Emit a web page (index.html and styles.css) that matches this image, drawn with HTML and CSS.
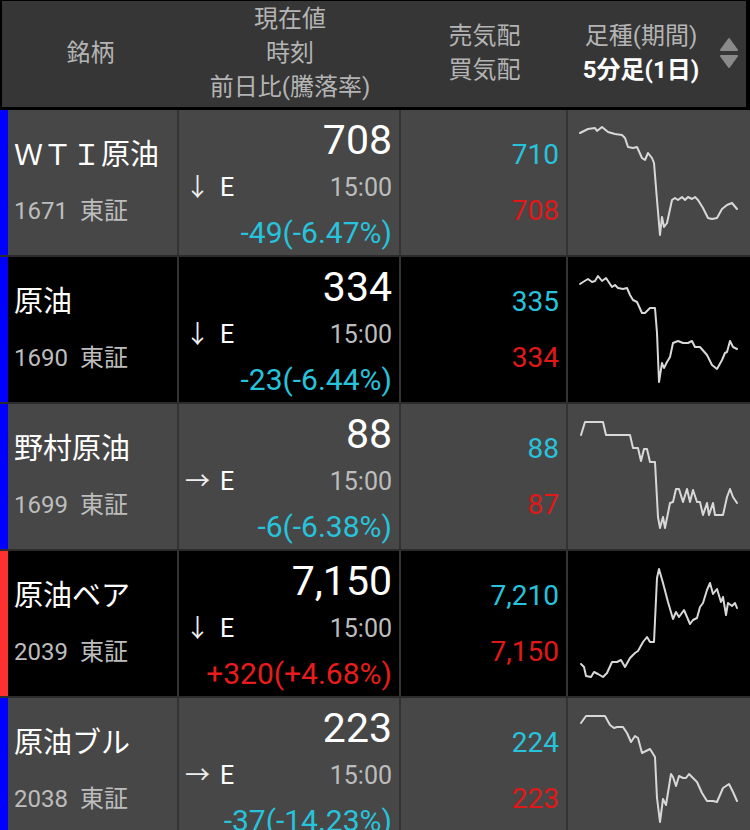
FILE: index.html
```html
<!DOCTYPE html>
<html lang="ja">
<head>
    <meta charset="UTF-8">
    <meta name="viewport" content="width=device-width, initial-scale=1.0">
    <title>銘柄一覧 - 原油</title>
    <link rel="stylesheet" href="styles.css">
</head>
<body>
    <!-- Column header -->
    <div class="head">
        <div class="hcol">銘柄</div>
        <div class="hcol">
            <div>現在値</div>
            <div>時刻</div>
            <div>前日比(騰落率)</div>
        </div>
        <div class="hcol">
            <div>売気配</div>
            <div>買気配</div>
        </div>
        <div class="hcol hchart">
            <div class="hchart-text">
                <div>足種(期間)</div>
                <div class="period">5分足(1日)</div>
            </div>
            <svg class="sort" width="18" height="32" viewBox="0 0 18 32">
                <polygon points="9,2 17,13 1,13" fill="#8a8a8a" stroke="#8a8a8a" stroke-width="2" stroke-linejoin="round"/>
                <polygon points="1,19 17,19 9,30" fill="#8a8a8a" stroke="#8a8a8a" stroke-width="2" stroke-linejoin="round"/>
            </svg>
        </div>
    </div>

    <!-- WTI -->
    <div class="row row-gray">
        <div class="bar bar-blue"></div>
        <div class="cell name">
            <div class="nm">ＷＴＩ原油</div>
            <div class="code">1671<span class="mkt">東証</span></div>
        </div>
        <div class="cell price">
            <div class="last">708</div>
            <div class="sub"><span class="arrow">↓</span><span class="flag">E</span><span class="time">15:00</span></div>
            <div class="chg down">-49(-6.47%)</div>
        </div>
        <div class="cell quote">
            <div class="ask">710</div>
            <div class="bid">708</div>
        </div>
        <div class="cell chart">
            <svg width="182" height="145" viewBox="-1 0 182 145">
                <polyline points="11,23 19,19 26,18 28,21 33,17 39,22 46,24 53,25 56,28 59,37 64,38 68,37 73,48 76,50 79,43 83,48 85,53 88,90 91,125 93,107 95,117 98,113 103,90 106,88 109,90 113,87 116,90 119,87 123,89 126,87 129,90 134,98 139,108 143,109 148,108 153,99 158,95 163,93 168,99"/>
            </svg>
        </div>
    </div>

    <!-- 原油 -->
    <div class="row row-black">
        <div class="bar bar-blue"></div>
        <div class="cell name">
            <div class="nm">原油</div>
            <div class="code">1690<span class="mkt">東証</span></div>
        </div>
        <div class="cell price">
            <div class="last">334</div>
            <div class="sub"><span class="arrow">↓</span><span class="flag">E</span><span class="time">15:00</span></div>
            <div class="chg down">-23(-6.44%)</div>
        </div>
        <div class="cell quote">
            <div class="ask">335</div>
            <div class="bid">334</div>
        </div>
        <div class="cell chart">
            <svg width="182" height="145" viewBox="-1 0 182 145">
                <polyline points="11,27 14,25 19,22 23,25 26,24 29,19 33,24 37,21 43,30 46,28 49,31 54,32 58,31 61,38 64,43 68,45 73,56 76,56 81,51 86,51 88,76 90,125 93,106 95,111 98,105 101,100 104,86 109,84 114,86 119,86 123,84 126,90 131,90 138,98 143,108 148,112 153,103 156,96 158,95 161,84 164,90 168,92"/>
            </svg>
        </div>
    </div>

    <!-- 野村原油 -->
    <div class="row row-gray">
        <div class="bar bar-blue"></div>
        <div class="cell name">
            <div class="nm">野村原油</div>
            <div class="code">1699<span class="mkt">東証</span></div>
        </div>
        <div class="cell price">
            <div class="last">88</div>
            <div class="sub"><span class="arrow">→</span><span class="flag">E</span><span class="time">15:00</span></div>
            <div class="chg down">-6(-6.38%)</div>
        </div>
        <div class="cell quote">
            <div class="ask">88</div>
            <div class="bid">87</div>
        </div>
        <div class="cell chart">
            <svg width="182" height="145" viewBox="-1 0 182 145">
                <polyline points="12,31 16,18 34,18 37,31 61,31 64,44 69,44 72,57 75,45 78,45 81,58 86,58 89,113 91,124 94,113 96,124 101,99 104,98 107,85 110,85 114,98 118,85 121,98 124,86 128,98 131,98 134,111 138,99 140,111 144,99 146,111 154,111 158,93 161,85 164,93 168,99"/>
            </svg>
        </div>
    </div>

    <!-- 原油ベア -->
    <div class="row row-black">
        <div class="bar bar-red"></div>
        <div class="cell name">
            <div class="nm">原油ベア</div>
            <div class="code">2039<span class="mkt">東証</span></div>
        </div>
        <div class="cell price">
            <div class="last">7,150</div>
            <div class="sub"><span class="arrow">↓</span><span class="flag">E</span><span class="time">15:00</span></div>
            <div class="chg up">+320(+4.68%)</div>
        </div>
        <div class="cell quote">
            <div class="ask">7,210</div>
            <div class="bid">7,150</div>
        </div>
        <div class="cell chart">
            <svg width="182" height="145" viewBox="-1 0 182 145">
                <polyline points="12,113 15,116 17,125 22,126 25,121 29,123 34,126 38,122 43,111 48,111 52,109 56,116 61,107 66,102 69,100 74,91 78,86 81,91 85,91 88,27 90,18 94,32 99,51 104,68 107,61 110,66 115,59 121,73 124,69 128,67 131,56 134,52 138,39 141,32 144,43 148,38 152,51 154,46 157,64 159,52 163,55 166,52 168,57"/>
            </svg>
        </div>
    </div>

    <!-- 原油ブル -->
    <div class="row row-gray">
        <div class="bar bar-blue"></div>
        <div class="cell name">
            <div class="nm">原油ブル</div>
            <div class="code">2038<span class="mkt">東証</span></div>
        </div>
        <div class="cell price">
            <div class="last">223</div>
            <div class="sub"><span class="arrow">→</span><span class="flag">E</span><span class="time">15:00</span></div>
            <div class="chg down">-37(-14.23%)</div>
        </div>
        <div class="cell quote">
            <div class="ask">224</div>
            <div class="bid">223</div>
        </div>
        <div class="cell chart">
            <svg width="182" height="145" viewBox="-1 0 182 145">
                <polyline points="12,25 17,18 36,18 41,27 45,30 48,29 54,29 58,35 62,44 66,38 69,40 73,55 77,53 81,51 86,59 88,100 91,124 94,101 97,107 102,76 104,79 107,88 110,78 114,80 117,80 120,76 128,84 133,95 138,103 144,103 148,104 154,90 157,88 160,86 164,94 168,103"/>
            </svg>
        </div>
    </div>
</body>
</html>
```

FILE: styles.css
```css
body {
    margin: 0;
    background-color: #000;
    font-family: Roboto, "Noto Sans CJK JP", sans-serif;
    overflow: hidden;
}

/* Header */
.head {
    display: grid;
    grid-template-columns: 177px 222px 167px 1fr;
    height: 110px;
    box-sizing: border-box;
    background-color: #363636;
    border: 2px solid #000;
    border-top-width: 1px;
    border-right-width: 4px;
    border-bottom-width: 3px;
    color: #b4b4b4;
    font-size: 24px;
    line-height: 34px;
}

.hcol {
    display: flex;
    flex-direction: column;
    justify-content: center;
    align-items: center;
    padding-bottom: 3px;
}

.hchart {
    flex-direction: row;
    justify-content: flex-start;
}

.hchart-text {
    width: 146px;
    text-align: center;
}

.period {
    color: #fff;
    font-weight: bold;
}

.sort {
    margin-left: 6px;
}

/* Rows */
.row {
    display: flex;
    height: 147px;
    box-sizing: border-box;
    border-bottom: 2px solid #2c2c2c;
}

.row-gray {
    background-color: #474747;
}

.row-black {
    background-color: #000;
}

.bar {
    width: 8px;
}

.bar-blue {
    background-color: #0000ff;
}

.bar-red {
    background-color: #ff3030;
}

.cell {
    box-sizing: border-box;
    border-right: 2px solid #333;
}

.name {
    width: 171px;
    padding: 25px 0 0 6px;
}

.nm {
    color: #fff;
    font-size: 29px;
    line-height: 40px;
    white-space: nowrap;
}

.code {
    margin-top: 18px;
    color: #bdbdbd;
    font-size: 24px;
    line-height: 36px;
}

.mkt {
    margin-left: 12px;
}

.price {
    width: 222px;
    padding: 8px 7px 0 6px;
}

.last {
    color: #fff;
    font-size: 41px;
    line-height: 44px;
    text-align: right;
}

.sub {
    display: flex;
    margin-top: 10px;
    font-size: 25px;
    line-height: 32px;
}

.arrow {
    width: 35px;
    color: #eee;
}

.flag {
    color: #fff;
}

.time {
    margin-left: auto;
    color: #bdbdbd;
}

.chg {
    margin-top: 10px;
    font-size: 30px;
    line-height: 38px;
    text-align: right;
    white-space: nowrap;
}

.down {
    color: #27c3dc;
}

.up {
    color: #e81c1c;
}

.quote {
    width: 167px;
    padding: 25px 7px 0 0;
    text-align: right;
    font-size: 28px;
}

.ask {
    color: #27c3dc;
    line-height: 40px;
}

.bid {
    margin-top: 18px;
    color: #e01818;
    line-height: 36px;
}

.chart {
    flex: 1;
    border-right: none;
}

.chart svg {
    display: block;
}

.chart polyline {
    fill: none;
    stroke: #d8d8d8;
    stroke-width: 2;
    stroke-linejoin: round;
    stroke-linecap: round;
}
```
